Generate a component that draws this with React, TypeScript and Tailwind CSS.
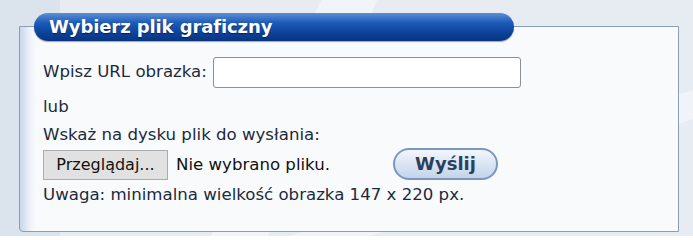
import React from "react";

const font = { fontFamily: '"DejaVu Sans", Verdana, sans-serif' };

const App: React.FC = () => {
  return (
    <div
      className="w-[693px] h-[236px] overflow-hidden pt-[26px] pl-[19px] bg-[#e3e9f0]"
      style={{
        ...font,
        backgroundImage:
          "linear-gradient(115deg, transparent 0 40%, rgba(255,255,255,0.45) 40% 47%, transparent 47% 100%), linear-gradient(160deg, transparent 0 70%, rgba(255,255,255,0.4) 70% 76%, transparent 76% 100%), linear-gradient(90deg, #dbe3ec 0 60px, #e6ecf2 60px 100%)",
      }}
    >
      {/* Panel */}
      <div className="w-[660px] h-[206px] border border-[#8d9db3] bg-[linear-gradient(90deg,#c7d6e8_0px,#eef3f9_10px,#f8fafc_16px)] rounded-bl-[4px]">
        {/* Tytuł */}
        <div className="-mt-[14px] ml-[14px] w-[480px] h-[28px] rounded-full bg-[linear-gradient(180deg,#5b8fd6_0%,#1d5bb8_35%,#0b3f97_75%,#0a357f_100%)] shadow-[0_1px_1px_rgba(0,0,0,0.35)] flex items-center pl-[15px]">
          <span className="text-white font-bold text-[18px] leading-none tracking-[-0.1px] [text-shadow:0_1px_1px_rgba(0,0,0,0.5)]">
            Wybierz plik graficzny
          </span>
        </div>

        <div className="pl-[23px] pt-[16px] text-[16.6px] text-[#1c2a3c] leading-none">
          <div className="flex items-center gap-[6px] h-[31px]">
            <span>Wpisz URL obrazka:</span>
            <input
              type="text"
              className="w-[308px] h-[31px] rounded-[3px] border border-[#8a9099] bg-white outline-none"
            />
          </div>
          <div className="mt-[10px] h-[19px] flex items-center">lub</div>
          <div className="mt-[9px] h-[19px] flex items-center">Wskaż na dysku plik do wysłania:</div>
          <div className="mt-[5px] flex items-center">
            <button className="w-[125px] h-[30px] bg-[#e1e1e1] border border-[#adadad] text-[16px] text-[#111]">
              Przeglądaj...
            </button>
            <span className="ml-[8px] text-[#111]">Nie wybrano pliku.</span>
            <button className="ml-[63px] -mt-[2px] w-[105px] h-[32px] rounded-full border-2 border-[#7b97c0] bg-[linear-gradient(180deg,#f3f7fc_0%,#dce7f4_45%,#c3d4ea_100%)] font-bold text-[18px] text-[#2d3f5e]">
              Wyślij
            </button>
          </div>
          <div className="mt-[6px] h-[19px] flex items-center">Uwaga: minimalna wielkość obrazka 147 x 220 px.</div>
        </div>
      </div>
    </div>
  );
};

export default App;
